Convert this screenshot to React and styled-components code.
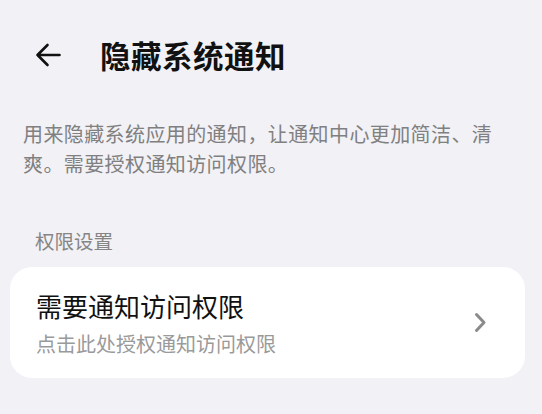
import React from 'react';
import styled, { createGlobalStyle } from 'styled-components';

const GlobalStyle = createGlobalStyle`
  html, body {
    margin: 0;
    padding: 0;
    background: #f2f1f6;
  }
  body {
    font-family: "Noto Sans CJK SC", "Noto Sans", sans-serif;
  }
`;

const Page = styled.div`
  width: 542px;
  min-height: 414px;
  background: #f2f1f6;
  overflow: hidden;
`;

const Header = styled.header`
  height: 110px;
  display: flex;
  align-items: center;
  padding-left: 35px;
  box-sizing: border-box;
`;

const BackButton = styled.button`
  width: 26px;
  height: 26px;
  padding: 0;
  border: none;
  background: none;
  display: flex;
  align-items: center;
  justify-content: center;
  margin-right: 39px;
  cursor: pointer;
`;

const Title = styled.h1`
  margin: 0;
  font-size: 30.5px;
  font-weight: 700;
  color: #111;
  letter-spacing: 0.5px;
`;

const Description = styled.p`
  margin: 9px 0 0;
  padding: 0 40px 0 23px;
  font-size: 20px;
  line-height: 30px;
  color: #808080;
  letter-spacing: 0.4px;
`;

const SectionLabel = styled.div`
  margin-top: 48px;
  padding-left: 35px;
  font-size: 19.5px;
  line-height: 28px;
  color: #858585;
`;

const Card = styled.div`
  margin: 12px 17px 0 10px;
  height: 111px;
  background: #fff;
  border-radius: 22px;
  display: flex;
  align-items: center;
  padding: 0 38px 0 26px;
  box-sizing: border-box;
  cursor: pointer;
`;

const CardText = styled.div`
  flex: 1;
  display: flex;
  flex-direction: column;
  gap: 8px;
`;

const CardTitle = styled.div`
  font-size: 26px;
  line-height: 34px;
  color: #111;
`;

const CardSub = styled.div`
  font-size: 20px;
  line-height: 26px;
  color: #9a9a9a;
`;

const Chevron = () => (
  <svg width="13" height="21" viewBox="0 0 13 21" fill="none">
    <path d="M2.5 2.5 L10 10.5 L2.5 18.5" stroke="#8a8a8a" strokeWidth="3" strokeLinecap="round" strokeLinejoin="round" />
  </svg>
);

const BackArrow = () => (
  <svg width="26" height="24" viewBox="0 0 26 24" fill="none">
    <path d="M24.5 12 H2.5 M12.5 2 L2.5 12 L12.5 22" stroke="#111" strokeWidth="2.6" strokeLinecap="round" strokeLinejoin="round" />
  </svg>
);

export default function App() {
  return (
    <>
      <GlobalStyle />
      <Page>
        <Header>
          <BackButton aria-label="返回">
            <BackArrow />
          </BackButton>
          <Title>隐藏系统通知</Title>
        </Header>
        <Description>
          用来隐藏系统应用的通知，让通知中心更加简洁、清爽。需要授权通知访问权限。
        </Description>
        <SectionLabel>权限设置</SectionLabel>
        <Card>
          <CardText>
            <CardTitle>需要通知访问权限</CardTitle>
            <CardSub>点击此处授权通知访问权限</CardSub>
          </CardText>
          <Chevron />
        </Card>
      </Page>
    </>
  );
}
